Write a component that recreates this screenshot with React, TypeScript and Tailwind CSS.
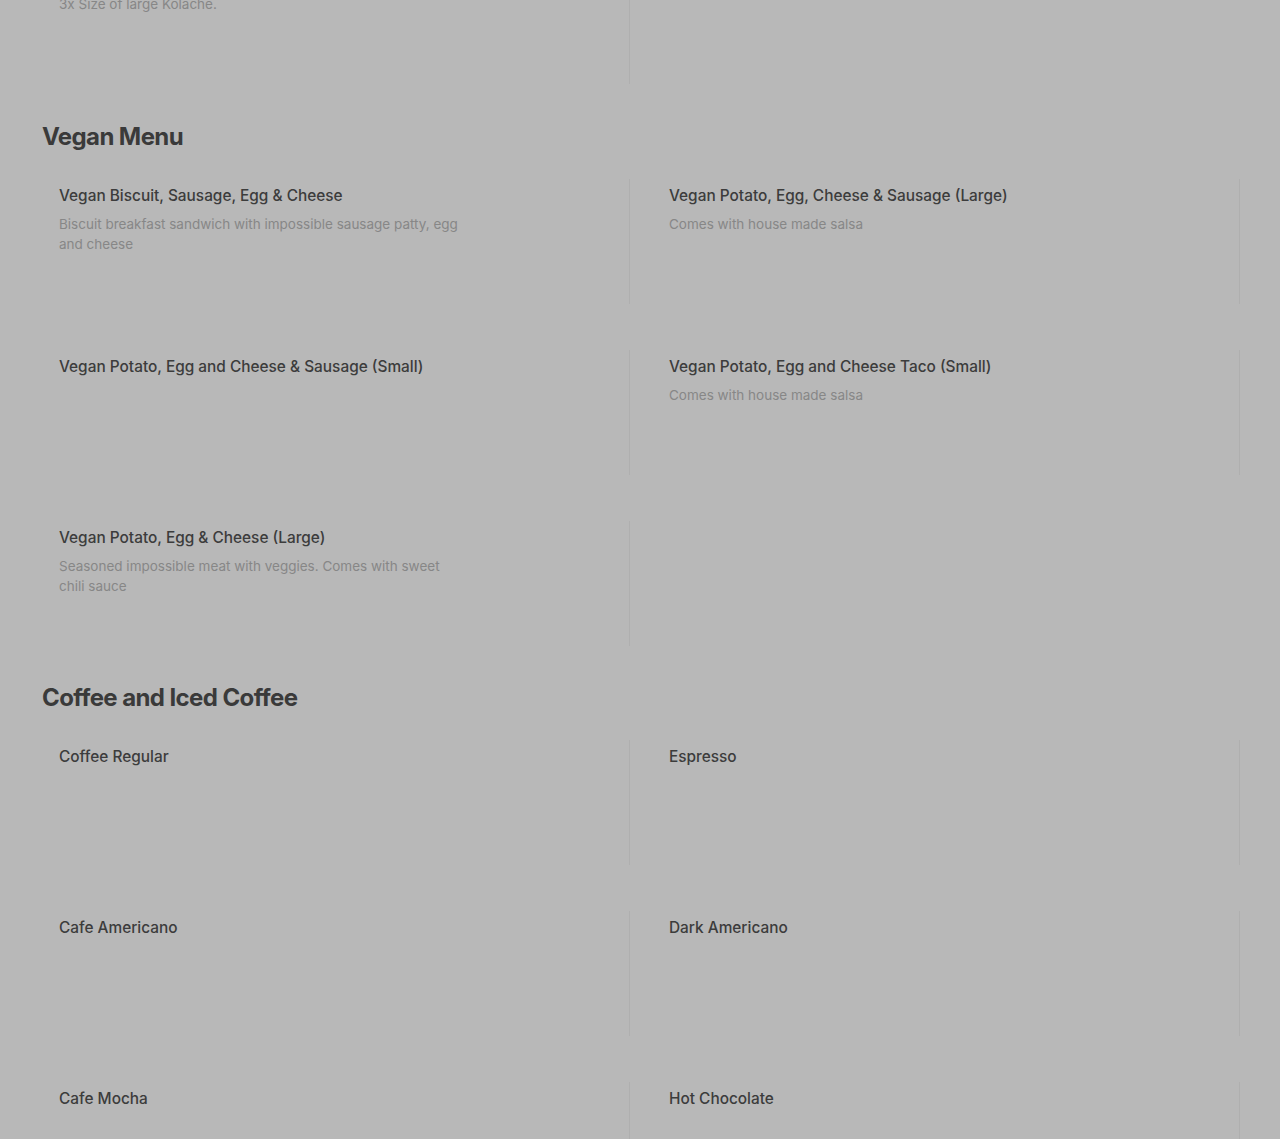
import React from 'react'

type Item = { name: string; desc?: string }

const sections: { title?: string; gap: string; items: (Item | null)[] }[] = [
  { gap: '', items: [{ name: 'Jumbo Kolache', desc: '3x Size of large Kolache.' }] },
  {
    title: 'Vegan Menu',
    gap: 'mt-[37px]',
    items: [
      {
        name: 'Vegan Biscuit, Sausage, Egg & Cheese',
        desc: 'Biscuit breakfast sandwich with impossible sausage patty, egg and cheese',
      },
      { name: 'Vegan Potato, Egg, Cheese & Sausage (Large)', desc: 'Comes with house made salsa' },
      { name: 'Vegan Potato, Egg and Cheese & Sausage (Small)' },
      { name: 'Vegan Potato, Egg and Cheese Taco (Small)', desc: 'Comes with house made salsa' },
      {
        name: 'Vegan Potato, Egg & Cheese (Large)',
        desc: 'Seasoned impossible meat with veggies. Comes with sweet chili sauce',
      },
    ],
  },
  {
    title: 'Coffee and Iced Coffee',
    gap: 'mt-[36px]',
    items: [
      { name: 'Coffee Regular' },
      { name: 'Espresso' },
      { name: 'Cafe Americano' },
      { name: 'Dark Americano' },
      { name: 'Cafe Mocha' },
      { name: 'Hot Chocolate' },
    ],
  },
]

function Card({ item }: { item: Item }) {
  return (
    <div className="flex h-[125px]">
      <div className="flex-1 pl-[17px] pt-[7px]">
        <p className="text-[15.4px] leading-5 font-medium text-[#3c3c3c]">{item.name}</p>
        {item.desc && (
          <p className="mt-[8px] max-w-[402px] text-[13.5px] leading-5 text-[#878787]">{item.desc}</p>
        )}
      </div>
      <div className="w-px h-full bg-[#afafaf]" />
    </div>
  )
}

export default function App() {
  return (
    <div
      className="h-[1139px] overflow-hidden bg-[#b8b8b8]"
      style={{ fontFamily: 'Inter, "Noto Sans", sans-serif' }}
    >
      <div className="ml-[42px] w-[1198px] -mt-[41px]">
        {sections.map((s, i) => (
          <section key={i} className={s.gap}>
            {s.title && (
              <h2 className="mb-[26px] text-[24px] leading-8 font-bold tracking-[-0.6px] text-[#3a3a3a]">
                {s.title}
              </h2>
            )}
            <div className="grid grid-cols-2 gap-x-[22px] gap-y-[46px]">
              {s.items.map((it, j) => (it ? <Card key={j} item={it} /> : <div key={j} />))}
            </div>
          </section>
        ))}
      </div>
    </div>
  )
}
